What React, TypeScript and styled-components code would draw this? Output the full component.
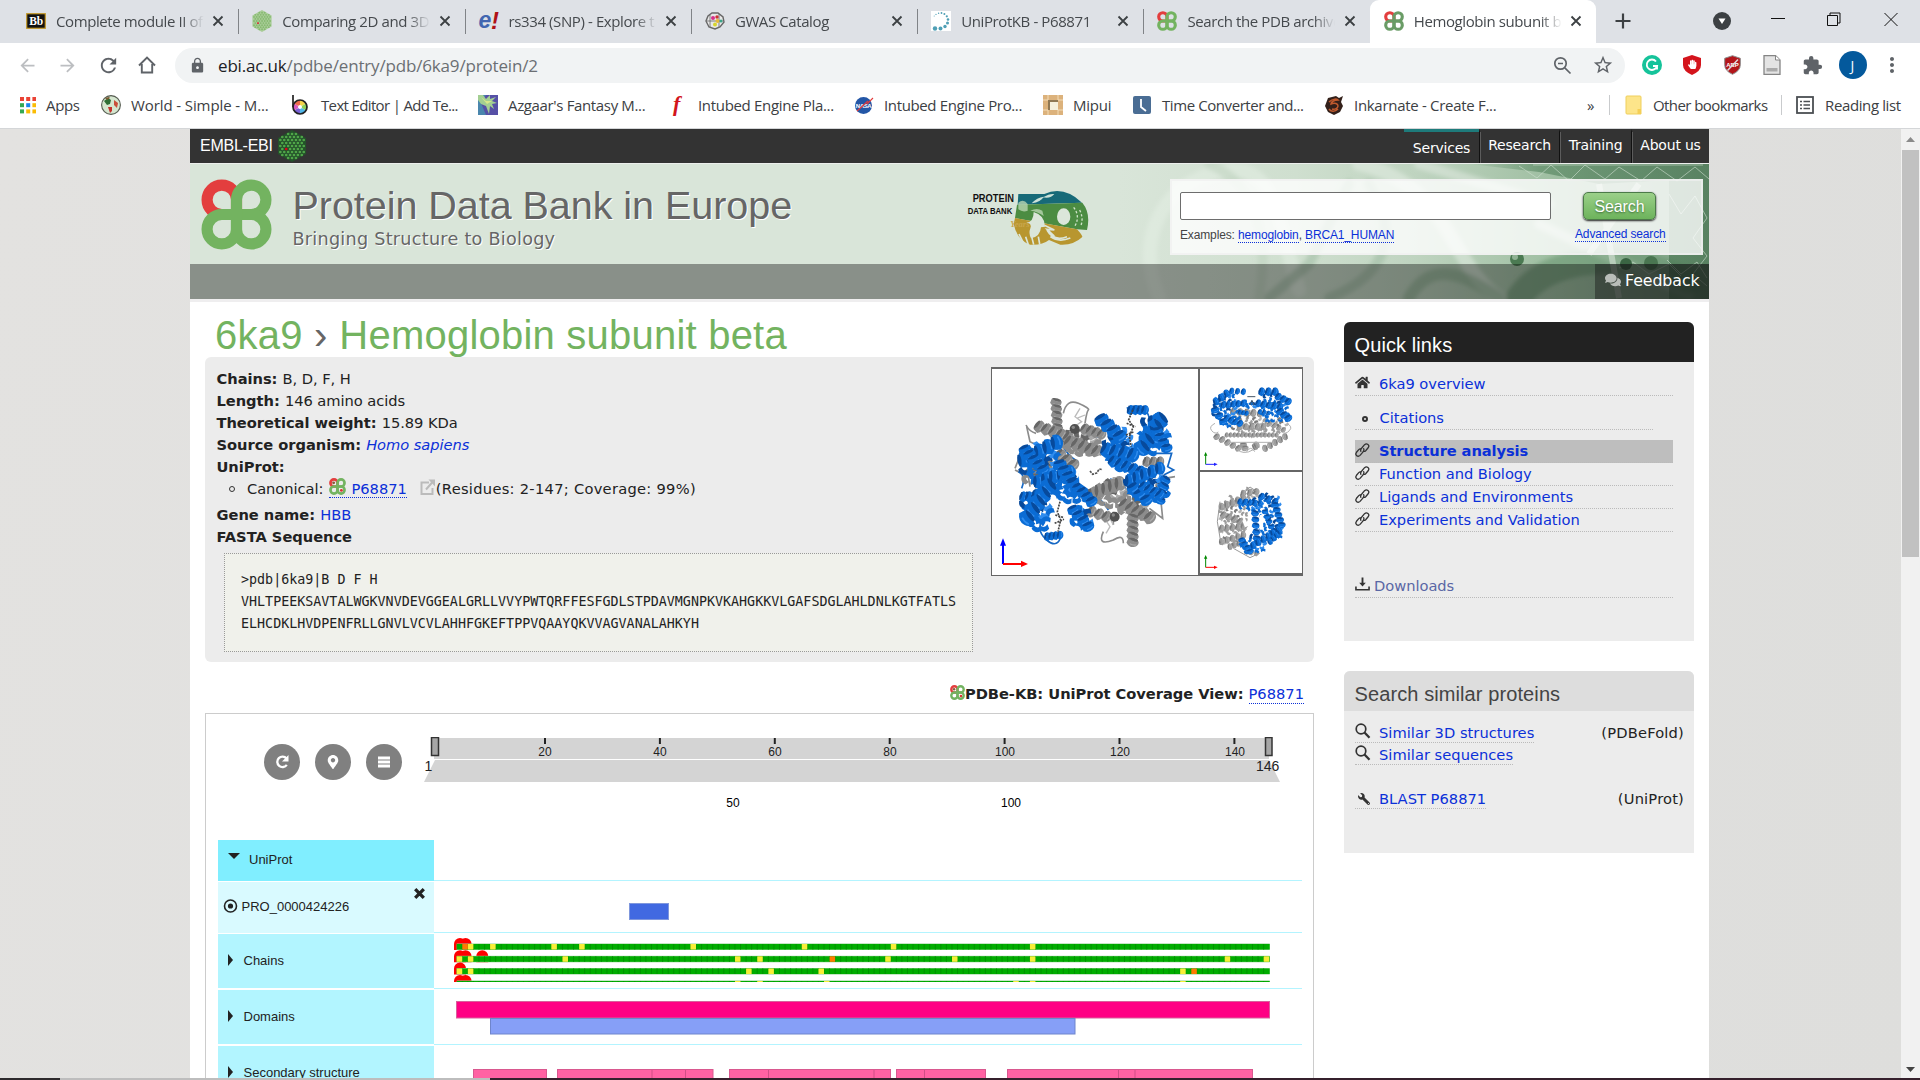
import React from "react";
import styled, { createGlobalStyle, css } from "styled-components";
import { MdArrowBack, MdArrowForward, MdRefresh, MdLock, MdExtension, MdMoreVert, MdStarBorder } from "react-icons/md";
import { FaHome, FaWrench, FaMapMarkerAlt, FaHandPaper, FaComments } from "react-icons/fa";

const ui = `"Open Sans", "Noto Sans", sans-serif`;
const verdana = `"DejaVu Sans", Verdana, sans-serif`;
const arial = `"Liberation Sans", Arial, sans-serif`;
const mono = `"DejaVu Sans Mono", monospace`;
const linkBlue = "#0b30d8";

const GlobalStyle = createGlobalStyle`
  *, *::before, *::after { box-sizing: border-box; }
  body { margin: 0; background: #fff; overflow: hidden; }
  svg { display: block; flex: none; }
`;

const Screen = styled.div`
  width: 1920px;
  height: 1080px;
  display: flex;
  flex-direction: column;
  overflow: hidden;
`;

/* ---------- browser chrome ---------- */

const TabStrip = styled.div`
  flex: none;
  height: 43px;
  background: #dee1e6;
  display: flex;
  padding-left: 12px;
`;

const TabBox = styled.div<{ $active?: boolean; $sep?: boolean }>`
  flex: none;
  width: 226.3px;
  height: 43px;
  display: flex;
  align-items: center;
  padding: 0 14px 2px;
  font: 15px/20px ${ui};
  letter-spacing: -0.4px;
  color: #45494d;
  position: relative;
  ${(p) => p.$active && css`
    background: #fff;
    border-radius: 9px 9px 0 0;
  `}
  ${(p) => p.$sep && css`
    &::after {
      content: "";
      position: absolute;
      right: -1px;
      top: 9px;
      width: 1px;
      height: 25px;
      background: #808387;
    }
  `}
`;

const TabTitle = styled.div`
  width: 148px;
  margin-left: 10px;
  overflow: hidden;
  white-space: nowrap;
  mask-image: linear-gradient(90deg, #000 126px, transparent 148px);
`;

const TabClose = styled.span`
  flex: 1;
  display: flex;
  justify-content: flex-end;
`;

const WindowControls = styled.div`
  flex: 1;
  display: flex;
  align-items: center;
  padding: 0 22px 2px 18px;
`;

const Spacer = styled.div<{ $w?: number }>`
  ${(p) => (p.$w ? `flex: none; width: ${p.$w}px;` : "flex: 1;")}
`;

const Toolbar = styled.div`
  flex: none;
  height: 44px;
  display: flex;
  align-items: center;
  padding-left: 15px;
`;

const NavIcon = styled.span<{ $dim?: boolean }>`
  flex: none;
  width: 40px;
  display: flex;
  padding-left: 2px;
  color: ${(p) => (p.$dim ? "#bcbec1" : "#5f6368")};
`;

const Omnibox = styled.div`
  width: 1450px;
  height: 35px;
  border-radius: 18px;
  background: #f1f3f4;
  display: flex;
  align-items: center;
  padding: 0 11px 0 14px;
  color: #5f6368;
  font: 17px/24px ${ui};
  letter-spacing: -0.17px;
`;

const Url = styled.div`
  flex: 1;
  margin-left: 12px;
  padding-top: 1px;
  color: #6b6f73;
  b { font-weight: 400; color: #202124; }
`;

const Extensions = styled.div`
  display: flex;
  align-items: center;
`;

const ExtSlot = styled.span<{ $w: number }>`
  width: ${(p) => p.$w}px;
  display: flex;
  justify-content: center;
  color: #5f6368;
`;

const Avatar = styled.span`
  width: 28px;
  height: 28px;
  border-radius: 50%;
  background: #04599c;
  color: #fff;
  display: flex;
  align-items: center;
  justify-content: center;
  font: 14px ${ui};
`;

const BookmarkBar = styled.div`
  flex: none;
  height: 42px;
  border-bottom: 1px solid #d4d6d8;
  display: flex;
  align-items: center;
  padding: 0 18px 6px 18px;
  font: 15px/20px ${ui};
  color: #3c4043;
`;

const Bookmark = styled.div<{ $w: number; $ls?: number }>`
  flex: none;
  width: ${(p) => p.$w}px;
  display: flex;
  align-items: center;
  gap: 10px;
  white-space: nowrap;
  letter-spacing: ${(p) => p.$ls ?? -0.5}px;
`;

const Bar = styled.span`
  width: 1px;
  height: 20px;
  background: #c9cbcd;
`;

/* ---------- page ---------- */

const Viewport = styled.div`
  flex: 1;
  min-height: 0;
  display: flex;
  background: linear-gradient(100deg, #e3e2e0 0%, #e0e0df 50%, #dededc 100%);
  overflow: hidden;
`;

const PageWrap = styled.div`
  width: 1901px;
  padding-left: 190px;
  overflow: hidden;
`;

const Page = styled.div`
  width: 1519px;
  height: 949px;
  background: #fff;
`;

const ScrollTrack = styled.div`
  flex: 1;
  background: #f1f1f1;
  display: flex;
  flex-direction: column;
  align-items: center;
  justify-content: space-between;
  padding: 8px 0 6px;
`;

const ScrollThumb = styled.div`
  width: 17px;
  height: 407px;
  background: #c1c1c1;
  margin-bottom: auto;
  margin-top: 8px;
`;

const MastTop = styled.div`
  height: 34px;
  background: #333;
  display: flex;
  padding-left: 10px;
`;

const Embl = styled.div`
  display: flex;
  align-items: center;
  gap: 5px;
  color: #fff;
  font: 16px ${arial};
  letter-spacing: -0.25px;
  flex: 1;
`;

const MastLink = styled.div<{ $w: number; $on?: boolean }>`
  width: ${(p) => p.$w}px;
  border-top: 3px solid ${(p) => (p.$on ? "#1e7b7b" : "#333")};
  ${(p) => !p.$on && "border-left: 1px solid #111; box-shadow: inset 1px 0 #5c5c5c;"}
  padding-top: ${(p) => (p.$on ? 4 : 1)}px;
  text-align: center;
  color: #fff;
  font: 14px/24px ${verdana};
  letter-spacing: -0.2px;
`;

const Banner = styled.div`
  height: 136px;
  position: relative;
  border-top: 1px solid #eceeec;
  background: #d9e5d9;
`;

const BannerArt = styled.svg`
  position: absolute;
  right: 0;
  top: 0;
`;

const BannerRow = styled.div`
  position: relative;
  height: 100px;
  display: flex;
  padding: 15px 6px 0 11px;
`;

const SiteName = styled.div`
  margin-left: 20.5px;
  width: 673px;
  color: #666;
  text-shadow: 1px 1px 0 #fff;
`;

const SiteTitle = styled.div`
  font: 39.5px/46px ${arial};
  letter-spacing: -0.04px;
  margin-top: 3px;
`;

const SiteTag = styled.div`
  font: 17.6px/22px ${verdana};
  letter-spacing: 0.27px;
`;

const YearsBox = styled.div`
  width: 203px;
  padding-top: 11px;
`;

const SearchPanel = styled.div`
  margin-left: auto;
  width: 533px;
  height: 76px;
  background: rgba(255, 255, 255, 0.8);
  border: 2px solid rgba(240, 240, 240, 0.7);
  display: flex;
  padding: 11px 0 0 8px;
  font: 12px/16px ${arial};
  letter-spacing: -0.14px;
  color: #444;
`;

const SearchField = styled.div`
  width: 371px;
  height: 28px;
  border: 1px solid #6d6d6d;
  border-radius: 2px;
  background: #fff;
  margin-bottom: 7px;
`;

const DotLink = styled.a`
  color: ${linkBlue};
  border-bottom: 1px dotted ${linkBlue};
`;

const SearchAction = styled.div`
  margin-left: 24px;
  width: 92px;
`;

const SearchButton = styled.div`
  width: 73px;
  height: 28px;
  margin: 0 0 6px 8px;
  border: 1px solid #4c7a49;
  border-radius: 5px;
  box-shadow: 0 1px 2px #222;
  background: linear-gradient(#9bd089, #6db35c);
  color: #fff;
  text-shadow: 0 1px 2px #3a6a35;
  text-align: center;
  font: 16px/27px ${arial};
`;

const NavBand = styled.div`
  position: relative;
  height: 35px;
  background: rgba(0, 0, 0, 0.37);
  display: flex;
  justify-content: flex-end;
`;

const Feedback = styled.div`
  width: 114px;
  background: rgba(30, 34, 32, 0.5);
  color: #fff;
  display: flex;
  align-items: center;
  gap: 4px;
  padding: 0 9px 3px 10px;
  font: 15.8px ${verdana};
  letter-spacing: -0.08px;
  svg { color: #b9bdb9; }
`;

const Content = styled.div`
  border-top: 3px solid #efeeef;
  display: flex;
  padding-left: 15px;
`;

const MainCol = styled.div`
  width: 1109px;
`;

const Heading = styled.h1`
  margin: 0;
  height: 55px;
  padding: 12px 0 0 10px;
  font: 400 40px/42px ${arial};
  color: #73b360;
  white-space: nowrap;
  letter-spacing: 0.22px;
  span { color: #666; margin: 0 0.5px 0 0; }
`;

const Summary = styled.section`
  height: 305px;
  border-radius: 6px;
  background: #ececec;
  display: flex;
  justify-content: space-between;
  padding: 10px 11px 0 11px;
`;

const Facts = styled.div`
  font: 14.67px/22px ${verdana};
  letter-spacing: -0.05px;
  color: #222;
  padding-top: 1px;
`;

const Fact = styled.div`
  height: 22px;
  padding-left: 0.5px;
  white-space: nowrap;
  b { letter-spacing: -0.03px; margin-right: 0.5px; }
  a { color: ${linkBlue}; }
`;

const CanonicalRow = styled.div`
  height: 26px;
  padding-left: 13px;
  display: flex;
  white-space: nowrap;
`;

const Bullet = styled.span<{ $ml?: number; $dark?: boolean }>`
  width: 6px;
  height: 6px;
  border: ${(p) => (p.$dark ? "2px solid #333" : "1px solid #333")};
  border-radius: 50%;
  margin: ${(p) => (p.$dark ? 9 : 8)}px 12px 0 ${(p) => p.$ml || 0}px;
`;

const KbLink = styled.a`
  display: inline-flex;
  gap: 5px;
  height: 20px;
  margin: 0 13px 0 6px;
  color: ${linkBlue};
  border-bottom: 1px dotted ${linkBlue};
  letter-spacing: 0;
`;

const Residues = styled.span`
  letter-spacing: 0.28px;
`;

const Fasta = styled.pre`
  margin: 5px 0 0 8px;
  width: 749px;
  height: 99px;
  border: 1px dotted #999;
  background: #f0f1eb;
  padding: 15px 16px 0;
  font: 13.35px/22px ${mono};
  letter-spacing: 0;
  color: #222;
`;

const Images = styled.div`
  width: 312px;
  height: 209px;
  background: #666;
  display: grid;
  grid-template-columns: 206px 102px;
  grid-template-rows: 101px 101px;
  gap: 2px;
  padding: 2px 1px 1px;
  svg { background: #fff; }
  > :first-child { grid-row: 1 / 3; height: 206px; }
`;

const CoverageRow = styled.div`
  height: 51px;
  display: flex;
  justify-content: flex-end;
  align-items: flex-start;
  padding: 21px 10px 0 0;
  font: 700 14.67px/22px ${verdana};
  letter-spacing: -0.03px;
  color: #222;
  svg { margin-top: 2px; }
  a { font-weight: 400; line-height: 18px; margin: 2px 0 0 5px; letter-spacing: 0; }
`;

const Viewer = styled.section`
  height: 400px;
  border: 1px solid #ccc;
  padding: 23px 11px 0 12px;
  font: 13px ${arial};
  color: #222;
`;

const ViewerTop = styled.div`
  height: 103px;
  display: flex;
`;

const Controls = styled.div`
  width: 204px;
  display: flex;
  gap: 15px;
  padding: 7px 0 0 46px;
`;

const RoundButton = styled.span`
  width: 36px;
  height: 36px;
  border-radius: 50%;
  background: #808080;
  color: #fff;
  display: flex;
  align-items: center;
  justify-content: center;
`;

const TrackRow = styled.div<{ $h: number }>`
  height: ${(p) => p.$h}px;
  display: flex;
`;

const TrackLabel = styled.div<{ $bg: string; $gap: number; $pl: number; $pb?: number }>`
  width: 216px;
  background: ${(p) => p.$bg};
  border-bottom: ${(p) => p.$gap}px solid #fff;
  display: flex;
  align-items: center;
  padding: 0 9px ${(p) => p.$pb ?? 2}px ${(p) => p.$pl}px;
`;

const TrackPlot = styled.div`
  flex: 1;
  border-bottom: 1px solid #b3f4ff;
  margin-bottom: 1px;
`;

const Caret = styled.span<{ $down?: boolean }>`
  ${(p) => p.$down
    ? css`border: 6px solid transparent; border-top-color: #222; border-bottom: 0; margin: -6px 9px 0 0;`
    : css`border: 6px solid transparent; border-left: 5.5px solid #222; border-right: 0; margin: -1px 10.5px 0 0;`}
`;

const Side = styled.aside`
  width: 351px;
  margin: 20px 0 0 30px;
`;

const SideBox = styled.section<{ $h: number; $mb?: number }>`
  height: ${(p) => p.$h}px;
  width: 350px;
  margin-bottom: ${(p) => p.$mb || 0}px;
  background: #ececec;
  border-radius: 6px 6px 0 0;
  font: 14.67px/22px ${verdana};
  letter-spacing: -0.03px;
  color: #222;
`;

const SideHead = styled.h3<{ $dark?: boolean }>`
  margin: 0;
  height: 40px;
  padding: 6px 0 0 10.5px;
  border-radius: 6px 6px 0 0;
  font: 400 20px/34px ${arial};
  letter-spacing: 0.1px;
  background: ${(p) => (p.$dark ? "#222" : "#ddd")};
  color: ${(p) => (p.$dark ? "#fff" : "#444")};
`;

const SideLink = styled.div<{ $mt: number; $w?: number; $on?: boolean; $muted?: boolean }>`
  width: ${(p) => p.$w || 318}px;
  height: 23px;
  margin: ${(p) => p.$mt}px 0 0 11px;
  border-bottom: 1px dotted #bbb;
  display: flex;
  color: ${(p) => (p.$muted ? "#5a67a5" : linkBlue)};
  ${(p) => p.$on && "background: #bebebe; font-weight: 700; letter-spacing: -0.1px; line-height: 21px;"}
`;

const IconSlot = styled.span<{ $w?: number }>`
  width: ${(p) => p.$w || 24}px;
  flex: none;
  padding-top: 2px;
  color: #333;
`;

const SimilarRow = styled.div<{ $mt: number }>`
  height: 22px;
  margin: ${(p) => p.$mt}px 10px 0 11px;
  display: flex;
  justify-content: space-between;
  line-height: 23px;
  > a { display: flex; height: 22px; color: ${linkBlue}; border-bottom: 1px dotted #bbb; letter-spacing: 0.02px; }
  > span { letter-spacing: 0.18px; }
`;

const FlippedWrench = styled.span`
  display: block;
  transform: scaleX(-1);
  width: 16px;
  padding: 4px 0 0 1px;
`;

const DeleteBox = styled.span`
  align-self: flex-start;
  padding-top: 6px;
`;

const Taskbar = styled.div`
  flex: none;
  height: 2px;
  background: linear-gradient(90deg, #2d2a2c 60px, #bdbdbd 60px, #bdbdbd 490px, #35202c 490px);
`;

/* ---------- drawings ---------- */

const petal = "M35 35 V20.5 A14.5 14.5 0 1 1 49.5 35 Z";
const PdbeLogo = ({ size, kb, soft }: { size: number; kb?: boolean; soft?: boolean }) => (
  <svg width={size} height={size} viewBox="0 0 70 70" fill="none" strokeWidth={11}>
    <path d={petal} transform="rotate(-90 35 35)" stroke="#e33e3e" />
    {[0, 90, 180].map((r) => (
      <path key={r} d={petal} transform={`rotate(${r} 35 35)`} stroke={soft ? "#6a9c66" : "#73b360"} />
    ))}
    {kb && <g><circle cx="19" cy="20" r="6" fill="#8a5a3c" /><circle cx="51" cy="51" r="6" fill="#d33" /></g>}
  </svg>
);

const HexLogo = ({ w, h, bg, fg }: { w: number; h: number; bg: string; fg: string }) => {
  const dots: React.ReactNode[] = [];
  for (let r = 0; r < 11; r++)
    for (let c = 0; c < 8; c++) {
      const x = 0.4 + c * 3.9 + (r % 2 ? 1.95 : 0);
      const y = 1 + r * 3;
      if (Math.abs(x - 14) * 0.577 + Math.abs(y - 16) < 15.6 && Math.abs(x - 14) < 13)
        dots.push(<circle key={r + "-" + c} cx={x} cy={y} r="1.35" fill={r === 6 && c === 2 ? "#e2001a" : fg} />);
    }
  return (
    <svg width={w} height={h} viewBox="0 0 28 32">
      <path d="M14 0 28 8V24L14 32 0 24V8Z" fill={bg} />
      {dots}
    </svg>
  );
};

const CloseX = () => (
  <svg width="12" height="12" viewBox="0 0 12 12" stroke="#3c4043" strokeWidth="1.8"><path d="M1.5 1.5l9 9M10.5 1.5l-9 9" /></svg>
);

const BbIcon = () => (
  <svg width="20" height="16" viewBox="0 0 20 16"><rect x=".7" y=".7" width="18.6" height="14.6" fill="#111" stroke="#c59b2c" strokeWidth="1.2" />
    <text x="10" y="12" textAnchor="middle" fontFamily="Liberation Serif" fontWeight="700" fontSize="11.5" fill="#fff">Bb</text></svg>
);
const EnsemblIcon = () => (
  <svg width="20" height="22" viewBox="0 0 20 22" overflow="visible"><text x="-0.5" y="18" fontFamily="Liberation Sans" fontStyle="italic" fontWeight="700" fontSize="23" fill="#4166b0">e</text>
    <text x="12" y="19" fontFamily="Liberation Sans" fontStyle="italic" fontWeight="700" fontSize="24" fill="#b01217">!</text></svg>
);
const GwasIcon = () => (
  <svg width="20" height="20" viewBox="0 0 20 20" fill="none" stroke="#666"><path d="M7 2h6l5 4 1 5-4 5-5 2-6-2-3-6 2-5z" fill="#e8e8e8" strokeWidth="1.4" />
    <path d="M2 10h16M5 4v12M14 3v13" strokeWidth=".8" />
    <g stroke="none"><circle cx="8" cy="7" r="2" fill="#d6308a" /><circle cx="12" cy="6" r="1.7" fill="#c33" /><circle cx="12.5" cy="10" r="2" fill="#e7b93a" /><circle cx="10" cy="13.5" r="2" fill="#d7d42f" /><circle cx="16" cy="10" r="1.5" fill="#3aa58a" /></g></svg>
);
const UniprotIcon = () => (
  <svg width="20" height="20" viewBox="0 0 20 20"><rect width="20" height="20" fill="#fff" />
    {[[4, 17.5, 2.2], [9.5, 17.5, 2], [14, 15.5, 1.7], [16.5, 12, 1.5], [17, 8.5, 1.3], [15.8, 5.3, 1.1], [13.4, 3, 1], [10.5, 2, .9], [7.6, 2.2, .7], [5, 3.4, .6], [3.2, 5, .5]].map(([x, y, r]) => <circle key={x + "" + y} cx={x} cy={y} r={r} fill="#4f9fb5" />)}</svg>
);

const AppsIcon = () => (
  <svg width="18" height="18" viewBox="0 0 18 18">
    {["#ea4335", "#ea4335", "#ea4335", "#34a853", "#1a85ec", "#fbbc04", "#34a853", "#fbbc04", "#fbbc04"].map((c, i) => (
      <rect key={i} x={2 + (i % 3) * 6.2} y={1 + Math.floor(i / 3) * 6.2} width="4" height="4" fill={c} />
    ))}</svg>
);
const WorldIcon = () => (
  <svg width="20" height="20" viewBox="0 0 20 20"><circle cx="10" cy="10" r="9.4" fill="#d5e6cf" stroke="#555b50" strokeWidth="1.1" />
    <path d="M3 6l4-3 3 2-1 4-3 1z" fill="#2f6e35" /><path d="M7 12l4 0 0 4-2 2z" fill="#c2312c" /><path d="M13 5l4 3-1 5-3-3z" fill="#c94f3a" /><path d="M4 3l4-1 1 1-3 2z" fill="#7b5a31" /></svg>
);
const WheelIcon = () => (
  <svg width="20" height="20" viewBox="0 0 20 20">
    <path d="M9 12V5a7 7 0 0 1 6.1 3.5z" fill="#f6d34a" /><path d="M9 12l6.1-3.5a7 7 0 0 1 0 7z" fill="#8ed05a" /><path d="M9 12l6.1 3.5A7 7 0 0 1 9 19z" fill="#4fb6e8" /><path d="M9 12v7a7 7 0 0 1-6-3.5z" fill="#7a62d8" /><path d="M9 12l-6 3.5a7 7 0 0 1 0-7z" fill="#d75bc0" /><path d="M9 12L3 8.5A7 7 0 0 1 9 5z" fill="#ee6a4a" />
    <circle cx="9" cy="12" r="7" fill="none" stroke="#222" strokeWidth="1.7" /><circle cx="9" cy="12" r="2" fill="#fff" /><path d="M2 0v12" stroke="#222" strokeWidth="1.7" /></svg>
);
const AzgaarIcon = () => (
  <svg width="20" height="20" viewBox="0 0 20 20"><rect width="20" height="20" fill="#5650a6" /><path d="M0 0h8L3 8l5 12H0z" fill="#4a86ad" />
    <path d="M0 0h5l3 4 4-4 0 4 6-2-4 4 5 2-5 1 2 5-4-3-1 8-3-8-5-2-3-4z" fill="#a3cf92" /><path d="M3 2l5 4 6 0-5 3z" fill="#d9e88a" /></svg>
);
const FIcon = () => (
  <svg width="20" height="24" viewBox="0 0 20 24" overflow="visible"><text x="5" y="18" fontFamily="Liberation Serif" fontStyle="italic" fontWeight="700" fontSize="22" fill="#d2151c">f</text></svg>
);
const NasaIcon = () => (
  <svg width="20" height="20" viewBox="0 0 20 20"><circle cx="9.5" cy="10.5" r="8.5" fill="#2356a6" /><text x="9.5" y="13" textAnchor="middle" fontFamily="Liberation Sans" fontWeight="700" fontSize="6" fill="#fff">NASA</text><path d="M13 9L19 3M3 16L14 6" stroke="#e23b3b" strokeWidth="1.1" /></svg>
);
const MipuiIcon = () => (
  <svg width="20" height="20" viewBox="0 0 20 20"><rect width="20" height="20" fill="#dcb27c" /><rect x="5" y="5" width="10" height="10" fill="#f5f0dc" /><path d="M5 5h10v2H7v8H5z" fill="#8f7853" /><path d="M5 0v5M15 0v5M5 15v5M15 15v5M0 5h5M0 15h5M15 5h5M15 15h5" stroke="#f3dcb6" /></svg>
);
const ClockIcon = () => (
  <svg width="20" height="20" viewBox="0 0 20 20"><rect x="1" y="1" width="18" height="18" rx="2" fill="#4a6d94" /><path d="M9 4v8l5 4" stroke="#fff" strokeWidth="1.8" fill="none" /></svg>
);
const InkIcon = () => (
  <svg width="20" height="20" viewBox="0 0 20 20"><path d="M4 3l8-2 3 2 4-2-2 6 2 4-3 6-6 3-6-3-3-6z" fill="#33201a" /><path d="M5 7c4-4 8-3 9-2-4 0-7 2-7 4 4-2 7 0 7 2s-3 4-6 3M5 14c2 3 6 3 9 0" stroke="#c05a2e" strokeWidth="1.5" fill="none" /></svg>
);
const FolderIcon = () => (
  <svg width="18" height="20" viewBox="0 0 18 20"><path d="M1 2q0-1 1-1h13q1 0 1 1v17H2q-1 0-1-1z" fill="#fde58a" stroke="#efcf5c" /><path d="M12.5 19v-5h3.5v5z" fill="#f5cf55" /></svg>
);
const ListIcon = () => (
  <svg width="20" height="18" viewBox="0 0 20 18" fill="none" stroke="#4b4f53"><rect x="2" y="1" width="16" height="16" strokeWidth="1.8" /><path d="M5 5.5h2M5 9h2M5 12.5h2M8.5 5.5H15M8.5 9H15M8.5 12.5H15" strokeWidth="1.6" /></svg>
);

const Magnifier = () => (
  <svg width="16" height="16" viewBox="0 0 16 16" fill="none" stroke="#333"><circle cx="6" cy="6" r="4.8" strokeWidth="1.7" /><path d="M9.5 9.5l5 5.2" strokeWidth="2.3" /></svg>
);
const ChainIcon = () => (
  <svg width="15" height="17" viewBox="0 0 16 17" fill="none" stroke="#333" strokeWidth="1.4" strokeLinecap="round">
    <path d="M6.2 9.4Q5.6 7.6 7 6.1L10.2 2.3Q12 .6 13.8 2T14 5.6L11.4 8.7Q10.4 9.7 9.1 9.4" />
    <path d="M9.3 6.6Q10 8.4 8.6 9.9L5.4 13.7Q3.6 15.4 1.8 14T1.6 10.4L4 7.6Q4.9 6.7 6 6.9" />
  </svg>
);
const DownloadIcon = () => (
  <svg width="15" height="16" viewBox="0 0 16 16" fill="none" stroke="#333"><path d="M8 0v7" strokeWidth="2" /><path d="M4.5 5.5h7L8 9.5z" fill="#333" stroke="none" /><path d="M1 9.5v3.5h14V9.5" strokeWidth="1.7" /></svg>
);
const ExternalIcon = () => (
  <svg width="16" height="18" viewBox="0 0 16 18" fill="none" stroke="#bbb" strokeWidth="2"><path d="M9 4.5H1.5V16h11v-6M6 11.5l7-8" /><path d="M8.5 1.5H15v7z" fill="#bbb" stroke="none" /></svg>
);
const WrenchIcon = () => <FlippedWrench><FaWrench size={12} /></FlippedWrench>;
const DeleteMark = () => (
  <DeleteBox>
    <svg width="11" height="11" viewBox="0 0 11 11" stroke="#222" strokeWidth="3.3"><path d="M1.2 1.2l8.6 8.6M9.8 1.2l-8.6 8.6" /></svg>
  </DeleteBox>
);

const Pdb50 = () => (
  <svg width="124" height="56" viewBox="0 0 372 168">
    <g fontFamily="Liberation Sans Narrow, Liberation Sans" fontWeight="700" fill="#111">
      <text x="0" y="0" fontSize="25" transform="translate(17 37) scale(1 1.25)" textLength="124" lengthAdjust="spacingAndGlyphs">PROTEIN</text>
      <text x="0" y="0" fontSize="21" transform="translate(2 72) scale(1 1.25)" textLength="134" lengthAdjust="spacingAndGlyphs">DATA BANK</text>
    </g>
    <path d="M154 12H232Q290-14 345 38L152 44Z" fill="#176a78" />
    <path d="M150 44L228 42 346 38Q372 70 360 120L330 118 144 84Z" fill="#4b8c42" />
    <path d="M144 84L330 118Q350 140 345 142Q320 166 280 164L246 150Q226 166 190 164Q150 150 140 102Z" fill="#b8962f" />
    <path d="M200 66Q234 76 234 110L222 112Q220 140 192 145Q184 130 190 115T178 98Q200 96 200 66Z" fill="#dbe6da" />
    <ellipse cx="290" cy="80" rx="20" ry="25" fill="#dbe6da" />
    <path d="M154 38q15-14 28 4v20q-15 6-28-4zM190 62q20-10 36 0l4 16q-18-14-40-16z" fill="#b9d6b2" opacity=".8" />
    <path d="M240 120q20 36 60 20M250 140q25 18 60 4M232 106l30 14-22-2 22 20M170 160l-14-28M184 164l-8-24M200 164l-6-24M218 162l-4-22" stroke="#dbe6da" strokeWidth="5" fill="none" />
    <path d="M194 40q16-18 36-20-8 16-36 20M228 22q20-12 34-10-10 14-34 10" fill="#cde2d8" />
    <path d="M320 52q20 26 4 56M338 60q12 25 4 46" stroke="#cfe3c9" strokeWidth="4" fill="none" strokeDasharray="7 6" />
    <text x="130" y="112" fontFamily="Liberation Serif" fontStyle="italic" fontWeight="700" fontSize="26" fill="#c9a64c">Years</text>
  </svg>
);

type Helix = [number, number, number, number, number];
type Tone = "b" | "g";
const tones = {
  b: { main: "#0b6cd4", dark: "#074a9c", lite: "#2f8cee" },
  g: { main: "#8c8c8c", dark: "#666", lite: "#a9a9a9" },
};

/* a helix seen from the side: wide flat turns, slightly tilted against the axis */
const HelixStrand = ({ h, tone, turn = 0.55 }: { h: Helix; tone: Tone; turn?: number }) => {
  const [x1, y1, x2, y2, w] = h;
  const len = Math.hypot(x2 - x1, y2 - y1);
  const n = Math.max(1, Math.round(len / (w * turn)));
  const ang = (Math.atan2(y2 - y1, x2 - x1) * 180) / Math.PI;
  const { main, dark, lite } = tones[tone];
  return (
    <g>
      {Array.from({ length: n + 1 }, (_, i) => {
        const x = x1 + ((x2 - x1) * i) / n, y = y1 + ((y2 - y1) * i) / n;
        return (
          <g key={i} transform={`translate(${x} ${y}) rotate(${ang + 16}) scale(${w / 40})`}>
            <path d="M-12 -15Q-18 0 -12 15L0 18Q-6 0 0 -18Z" fill={dark} />
            <path d="M-8 -19Q8 -23 14 -8T6 20L-10 17Q0 0 -8 -19Z" fill={main} />
            <path d="M5 -14Q10 -4 7 8" stroke={lite} strokeWidth="4" fill="none" />
          </g>
        );
      })}
    </g>
  );
};

/* short ribbon pieces spread over an elliptical patch of the fold */
type Patch = [number, number, number, number, number];
const RibbonPatch = ({ patch, tone, size }: { patch: Patch; tone: Tone; size: number }) => {
  const [cx, cy, rx, ry, count] = patch;
  const { main, dark, lite } = tones[tone];
  const fills = [dark, main, main, lite, main];
  return (
    <g>
      {Array.from({ length: count }, (_, i) => {
        const a = i * 2.4, r = Math.sqrt((i + 0.5) / count);
        return (
          <path
            key={i}
            d="M-11 -6Q0 -16 12 -5L9 6Q0 -3 -9 6Z"
            fill={fills[i % 5]}
            transform={`translate(${cx + Math.cos(a) * r * rx} ${cy + Math.sin(a) * r * ry}) rotate(${(i * 67) % 360}) scale(${size})`}
          />
        );
      })}
    </g>
  );
};

const greyMain: Helix[] = [[288, 142, 292, 218, 34], [238, 215, 325, 248, 38], [330, 262, 412, 290, 42], [375, 222, 425, 238, 34], [300, 300, 340, 330, 40], [215, 290, 225, 380, 26], [265, 320, 260, 395, 26], [400, 415, 480, 385, 44], [495, 450, 570, 488, 42], [518, 490, 518, 562, 36], [395, 470, 440, 485, 36], [560, 320, 600, 320, 32], [585, 430, 600, 380, 22]];
const blueMain: Helix[] = [[190, 315, 290, 262, 48], [195, 285, 250, 345, 40], [235, 380, 330, 350, 42], [300, 330, 350, 400, 42], [340, 385, 395, 440, 38], [190, 425, 225, 425, 32], [265, 395, 200, 490, 52], [340, 465, 385, 515, 38], [262, 545, 300, 540, 26], [425, 195, 480, 245, 46], [512, 165, 555, 165, 30], [600, 195, 545, 280, 52], [590, 230, 620, 280, 36], [440, 285, 520, 300, 46], [460, 320, 540, 350, 38], [510, 375, 600, 340, 40], [520, 400, 560, 435, 42], [615, 375, 600, 435, 34], [550, 395, 600, 420, 34]];
const greyPatches: Patch[] = [[360, 262, 60, 36, 26], [450, 415, 58, 40, 26], [515, 455, 40, 34, 14], [230, 360, 40, 40, 12]];
const bluePatches: Patch[] = [[245, 330, 60, 66, 34], [325, 395, 52, 46, 26], [232, 465, 44, 62, 26], [480, 285, 44, 62, 26], [560, 395, 66, 46, 30], [580, 240, 46, 56, 24], [365, 488, 26, 34, 10]];

const AssemblyFront = () => (
  <svg width="206" height="206" viewBox="96 42 618 618">
    <g fill="none" strokeWidth="5" stroke="#8c8c8c">
      <path d="M310 175q10-45 45-30t30 20-10 40M200 215l10 45 40 20M198 210q10 20 30 25M165 340l20-50M165 345l40 20 5 30M645 365l-30 5-15 40 8 80-40-30M430 530q-20 45 30 25 30-20 30 10M460 470v40" />
    </g>
    <g fill="none" strokeWidth="5" stroke="#1668c4">
      <path d="M175 350q25 10 10 50M250 490q-25 35 10 65t45-20M370 245h45M310 275q15 30 45 45M500 160q50-20 65 20t-15 50M545 295h90l-12 40 18 10-30 15M450 372q50 10 50 45M385 420q35 0 60 45" />
    </g>
    {greyPatches.map((p, i) => <RibbonPatch key={i} patch={p} tone="g" size={1.2} />)}
    {greyMain.map((h, i) => <HelixStrand key={i} h={h} tone="g" />)}
    {bluePatches.map((p, i) => <RibbonPatch key={i} patch={p} tone="b" size={1.2} />)}
    {blueMain.map((h, i) => <HelixStrand key={i} h={h} tone="b" />)}
    <path d="M356 345l30-32 34-12 50 54-38 20-46 28-28-20z" fill="#fff" />
    <path d="M390 348l8 10 12-4 8-12 10 2" stroke="#555" strokeWidth="5" fill="none" strokeDasharray="7 3" />
    <path d="M518 165l-12 30 14 20-12 30 6 30M500 205l26 10M498 240l24-10M300 440l-8 30 10 25-8 35M286 480l26 8M284 505l28-12" stroke="#444" strokeWidth="5" fill="none" strokeDasharray="6 3" />
    <path d="M360 160l-15 25 20 15-15 10M375 180l-25 10M440 500l10 15-12 20M450 490l10 20" stroke="#bbb" strokeWidth="4" fill="none" />
    <circle cx="344" cy="222" r="15" fill="#505050" /><circle cx="340" cy="217" r="5" fill="#888" />
    <circle cx="464" cy="485" r="15" fill="#505050" /><circle cx="460" cy="480" r="5" fill="#888" />
    <path d="M129 627V570" stroke="#00f" strokeWidth="6" /><path d="M120 572l9-22 9 22z" fill="#00f" />
    <path d="M129 627h56" stroke="#f00" strokeWidth="6" /><path d="M183 617l21 10-21 9z" fill="#f00" />
  </svg>
);

const sideBlue: Helix[] = [[768, 140, 800, 115, 24], [815, 108, 850, 110, 20], [765, 165, 790, 200, 26], [790, 150, 850, 145, 22], [800, 190, 840, 205, 22], [905, 110, 945, 110, 26], [955, 125, 985, 140, 24], [895, 145, 960, 155, 24], [960, 170, 985, 190, 26], [840, 172, 860, 175, 16], [900, 170, 925, 175, 16]];
const sideGrey: Helix[] = [[770, 245, 835, 280, 22], [850, 270, 855, 280, 22], [885, 275, 890, 270, 22], [975, 245, 915, 280, 22], [800, 240, 950, 240, 16], [820, 170, 900, 175, 24], [840, 215, 910, 215, 22], [930, 205, 970, 225, 18]];
const sideBluePatches: Patch[] = [[800, 165, 42, 52, 34], [940, 155, 48, 50, 30], [870, 148, 36, 10, 8]];
const sideGreyPatches: Patch[] = [[870, 210, 60, 40, 40], [945, 212, 36, 24, 14]];
const topGrey: Helix[] = [[785, 455, 850, 430, 24], [790, 480, 840, 500, 24], [785, 520, 850, 515, 22], [785, 560, 850, 540, 22], [850, 415, 890, 410, 22], [810, 575, 850, 560, 20], [860, 590, 890, 595, 18]];
const topBlue: Helix[] = [[840, 440, 900, 445, 20], [905, 425, 945, 440, 24], [945, 450, 965, 510, 24], [885, 475, 890, 550, 24], [915, 470, 940, 530, 20], [865, 580, 955, 525, 24], [930, 560, 960, 530, 20], [845, 555, 870, 590, 20]];
const topGreyPatches: Patch[] = [[820, 500, 44, 76, 50], [870, 415, 26, 18, 10]];
const topBluePatches: Patch[] = [[925, 455, 40, 40, 20], [870, 450, 36, 20, 14], [935, 525, 34, 36, 18], [880, 570, 40, 28, 18]];

interface SmallViewProps { box: string; grey: Helix[]; blue: Helix[]; greyP: Patch[]; blueP: Patch[]; oy: number; xColor: string; hole?: boolean }
const SmallView = ({ box, grey, blue, greyP, blueP, oy, xColor, hole }: SmallViewProps) => (
  <svg width="102" height="101" viewBox={box}>
    <g opacity=".85">
      {greyP.map((p, i) => <RibbonPatch key={i} patch={p} tone="g" size={0.6} />)}
      {grey.map((h, i) => <HelixStrand key={i} h={h} tone="g" turn={0.75} />)}
    </g>
    {blueP.map((p, i) => <RibbonPatch key={i} patch={p} tone="b" size={0.65} />)}
    {blue.map((h, i) => <HelixStrand key={i} h={h} tone="b" turn={0.75} />)}
    {hole
      ? <g fill="none" stroke="#9a9a9a" strokeWidth="3"><path d="M855 410l15-14 18 12M780 440l-8 60 10 60M820 580l50 28 30-14" /><path d="M904 480v44M852 495l8 20" stroke="#fff" strokeWidth="11" /></g>
      : <g fill="none" stroke="#b0b0b0" strokeWidth="3"><path d="M765 205q-20 10-10 22t20 4M980 205q20 10 8 22t-18 4M860 290q12-20 24 0M805 262h130M830 282q20 20 50 2" /><path d="M862 125h24M870 150l6-14 6 14" stroke="#456" /></g>}
    <path d={`M737 ${oy}v-28`} stroke="#080" strokeWidth="3" /><path d={`M732 ${oy - 26}l5-11 5 11z`} fill="#080" />
    <path d={`M737 ${oy}h27`} stroke={xColor} strokeWidth="3" /><path d={`M762 ${oy - 5}l11 5-11 5z`} fill={xColor} />
  </svg>
);

const Banner3d = () => (
  <BannerArt width="590" height="135" viewBox="0 0 590 135">
    <defs>
      <linearGradient id="fade" x1="0" x2="1">
        <stop offset="0" stopColor="#d9e5d9" /><stop offset=".3" stopColor="#cfdfcf" /><stop offset=".5" stopColor="#bfd4c0" /><stop offset=".75" stopColor="#9dbda0" /><stop offset="1" stopColor="#7da184" />
      </linearGradient>
      <linearGradient id="meshFade" x1="0" x2="1">
        <stop offset="0" stopColor="#4b7d56" stopOpacity="0" /><stop offset=".3" stopColor="#4b7d56" stopOpacity=".55" /><stop offset="1" stopColor="#3f6c49" stopOpacity=".6" />
      </linearGradient>
      <filter id="soft"><feGaussianBlur stdDeviation="2" /></filter>
    </defs>
    <rect width="590" height="135" fill="url(#fade)" />
    <g fill="none" strokeLinecap="round" filter="url(#soft)">
      <path d="M40 134C10 60 60 10 110 6s50 60 70 120" stroke="#e6efe6" strokeWidth="14" opacity=".5" />
      <path d="M90 0c50 20 60 80 50 134" stroke="#bdd2be" strokeWidth="10" opacity=".5" />
      <path d="M230 20L190 100 150 134M250 20c30 50 20 90-40 114" stroke="#9cba9f" strokeWidth="10" opacity=".5" />
      <path d="M240 0c90 20 90 100 140 134" stroke="#e7f0e7" strokeWidth="14" opacity=".5" />
      <path d="M290 134c20-36 50-28 90 0" stroke="#80a685" strokeWidth="12" opacity=".45" />
      <path d="M300 0l130 40M420 60l150 70" stroke="#e8f0e8" strokeWidth="10" opacity=".45" />
      <path d="M400 134q20-30 70-36t100 20" stroke="#5f8f68" strokeWidth="26" opacity=".5" />
    </g>
    <path d="M350 0h240v135h-40V16L480 20 420 8Z" fill="url(#meshFade)" />
    <path d="M400 2l18 12 14-13 18 16 16-16 20 14 14-12 22 14 16-14 20 14 18-14 14 12M414 1h170M550 30l12 20 14-18 12 22-14 20 14 18-14 18 14 12M548 96l14 14 16-12 10 16M500 104l14-6 16 12 20-10 12 12" fill="none" stroke="#cfe0d0" strokeWidth="1" opacity=".6" />
    <circle cx="398" cy="95" r="7" fill="#4b7a52" /><circle cx="396" cy="93" r="3" fill="#8fb293" />
    <circle cx="507" cy="100" r="6" fill="#3a6543" /><circle cx="532" cy="99" r="7" fill="#4a7651" />
    <path d="M480 20l20 114M470 90l50-70" stroke="#dfe9df" strokeWidth="6" opacity=".55" />
  </BannerArt>
);

const Ruler = () => (
  <svg width="868" height="103" viewBox="422 736 868 103" fontFamily="Liberation Sans" fontSize="12" fill="#222">
    <rect x="434" y="737" width="835" height="21" fill="#d4d4d4" />
    <path d="M435 759H1269L1280 781H424Z" fill="#d4d4d4" />
    {[20, 40, 60, 80, 100, 120, 140].map((n, i) => (
      <g key={n}>
        <rect x={544 + i * 115 - 0.1 * i} y="737" width="2" height="6" />
        <text x={545 + i * 115} y="755" textAnchor="middle">{n}</text>
      </g>
    ))}
    <rect x="431.5" y="736.5" width="7" height="18" fill="#a6a6a6" stroke="#333" strokeWidth="1.5" />
    <rect x="1265.5" y="736.5" width="6.5" height="18" fill="#a6a6a6" stroke="#333" strokeWidth="1.5" />
    <g fontSize="14">
      <text x="424.5" y="770">1</text>
      <text x="1256" y="770">146</text>
    </g>
    <text x="733" y="806" textAnchor="middle" fill="#000">50</text>
    <text x="1011" y="806" textAnchor="middle" fill="#000">100</text>
  </svg>
);

const cell = 5.565;
const chainX = 456.7;
const chainRows = [
  { y: 944, h: 5.5, yellow: [2, 6, 17, 22, 42, 62, 78, 103], orange: [1], clash: [0, 1] },
  { y: 956.3, h: 5.5, yellow: [0, 2, 19, 50, 54, 77, 89, 103, 138, 145], orange: [67], clash: [0, 1, 4] },
  { y: 968.5, h: 5.5, yellow: [0, 2, 52, 56, 65, 130], orange: [132], clash: [0] },
  { y: 981, h: 1, yellow: [50, 54, 66, 100, 103, 130], orange: [], clash: [0, 1] },
];
const ChainsPlot = () => (
  <svg width="868" height="48" viewBox="434 934 868 48">
    {chainRows.map((r) => (
      <g key={r.y}>
        {r.clash.map((c) => <path key={c} d={`M${454 + c * cell} ${r.y + 6}v-6a6 6 0 0 1 12 0v6z`} fill="#f00" />)}
        <rect x={chainX} y={r.y - 0.5} width="813" height={r.h + 1} fill="#8fcf8f" />
        <rect x={chainX} y={r.y} width="813" height={r.h} fill="#00ad00" />
        {Array.from({ length: 145 }, (_, i) => <rect key={i} x={chainX + (i + 1) * cell - 0.5} y={r.y} width="1" height={r.h} fill="#009200" />)}
        {r.yellow.map((c) => <rect key={c} x={chainX + c * cell} y={r.y} width={cell} height={r.h} fill="#f8ee38" />)}
        {r.orange.map((c) => <rect key={c} x={chainX + c * cell} y={r.y} width={cell} height={r.h} fill="#ff7a00" />)}
      </g>
    ))}
  </svg>
);
const DomainsPlot = () => (
  <svg width="868" height="54" viewBox="434 990 868 54">
    <rect x="456.5" y="1001.5" width="813" height="16.5" fill="#ff0084" stroke="#d9609c" />
    <rect x="490.5" y="1018.5" width="584.5" height="15.5" fill="#869ff7" stroke="#6f85cc" />
  </svg>
);
const SecondaryPlot = () => (
  <svg width="868" height="32" viewBox="434 1046 868 32">
    {[[473, 547], [557, 713.5], [729, 891], [896, 986], [1007, 1253]].map(([a, b]) => (
      <rect key={a} x={a + 0.5} y="1069.5" width={b - a - 1} height="16" fill="#ff62a3" stroke="#d9588f" />
    ))}
    {[652, 685.5, 768.5, 874, 924.5, 1118.5, 1135].map((x) => <rect key={x} x={x - 0.5} y="1070" width="1" height="10" fill="#cf4f86" />)}
  </svg>
);

/* ---------- data ---------- */

const tabs: { title: string; icon: React.ReactNode; active?: boolean }[] = [
  { title: "Complete module II of", icon: <BbIcon /> },
  { title: "Comparing 2D and 3D", icon: <HexLogo w={20} h={22} bg="#a9cd98" fg="#86b970" /> },
  { title: "rs334 (SNP) - Explore t", icon: <EnsemblIcon /> },
  { title: "GWAS Catalog", icon: <GwasIcon /> },
  { title: "UniProtKB - P68871", icon: <UniprotIcon /> },
  { title: "Search the PDB archive", icon: <PdbeLogo size={20} /> },
  { title: "Hemoglobin subunit b", icon: <PdbeLogo size={20} soft />, active: true },
];

const bookmarks: [string, number, React.ReactNode, number?][] = [
  ["Apps", 83, <AppsIcon />, -0.35],
  ["World - Simple - M...", 190, <WorldIcon />, -0.1],
  ["Text Editor | Add Te...", 187, <WheelIcon />, -0.65],
  ["Azgaar's Fantasy M...", 190, <AzgaarIcon />, -0.35],
  ["Intubed Engine Pla...", 186, <FIcon />, -0.32],
  ["Intubed Engine Pro...", 189, <NasaIcon />, -0.36],
  ["Mipui", 89, <MipuiIcon />, -0.25],
  ["Time Converter and...", 192, <ClockIcon />, -0.42],
  ["Inkarnate - Create F...", 263, <InkIcon />, -0.3],
];

export default function App() {
  return (
    <Screen>
      <GlobalStyle />
      <TabStrip>
        {tabs.map((t, i) => (
          <TabBox key={t.title} $active={t.active} $sep={i < 5}>
            {t.icon}
            <TabTitle>{t.title}</TabTitle>
            <TabClose><CloseX /></TabClose>
          </TabBox>
        ))}
        <WindowControls>
          <svg width="18" height="18" viewBox="0 0 18 18" stroke="#3c4043" strokeWidth="2.2"><path d="M9 1.5v15M1.5 9h15" /></svg>
          <Spacer />
          <svg width="18" height="18" viewBox="0 0 18 18"><circle cx="9" cy="9" r="9" fill="#3c4043" /><path d="M5.5 6.5h7L9 12z" fill="#fff" /></svg>
          <Spacer $w={40} />
          <svg width="14" height="14" viewBox="0 0 14 14" stroke="#111"><path d="M0 4.5h14" /></svg>
          <Spacer $w={42} />
          <svg width="14" height="18" viewBox="0 0 14 18" stroke="#111" fill="none"><path d="M.5 3.5h10v10H.5zM3 3.5V1h10v10h-2.5" /></svg>
          <Spacer $w={43} />
          <svg width="14" height="18" viewBox="0 0 14 18" stroke="#111"><path d="M.5 1l13 13M13.5 1L.5 14" /></svg>
        </WindowControls>
      </TabStrip>

      <Toolbar>
        <NavIcon $dim><MdArrowBack size={21} /></NavIcon>
        <NavIcon $dim><MdArrowForward size={21} /></NavIcon>
        <NavIcon><MdRefresh size={23} /></NavIcon>
        <NavIcon>
          <svg width="20" height="20" viewBox="0 0 20 20" fill="none" stroke="#5f6368" strokeWidth="1.9"><path d="M2 10.5L10 2.5l8 8M4.8 9v8.5h10.4V9" /></svg>
        </NavIcon>
        <Omnibox>
          <MdLock size={17} />
          <Url><b>ebi.ac.uk</b>/pdbe/entry/pdb/6ka9/protein/2</Url>
          <svg width="19" height="19" viewBox="0 0 19 19" fill="none" stroke="#5f6368" strokeWidth="1.7"><circle cx="7.5" cy="7.5" r="5.7" /><path d="M11.8 11.8l5.7 5.7M5 7.5h5" /></svg>
          <Spacer $w={20} />
          <MdStarBorder size={22} />
        </Omnibox>
        <Extensions>
          <Spacer $w={7} />
          <ExtSlot $w={40}>
            <svg width="20" height="20" viewBox="0 0 20 20"><circle cx="10" cy="10" r="10" fill="#15c39a" /><path d="M14 6.5A5.2 5.2 0 1 0 15 11h-4M15 11v3.5" stroke="#fff" strokeWidth="1.9" fill="none" /></svg>
          </ExtSlot>
          <ExtSlot $w={40}>
            <svg width="18" height="20" viewBox="0 0 18 20"><path d="M9 0l9 3v7q0 6-9 10Q0 16 0 10V3z" fill="#d4141c" /><FaHandPaper x={4.5} y={4.5} size={9.5} color="#fff" /></svg>
          </ExtSlot>
          <ExtSlot $w={40}>
            <svg width="17" height="20" viewBox="0 0 17 20"><path d="M8.5 .7l7.8 2.6v6.5q0 6-7.8 9.5Q.7 15.8 .7 9.8V3.3z" fill="#b3161b" stroke="#8a8a8a" /><text x="8.5" y="11.5" textAnchor="middle" fontFamily="Liberation Sans" fontWeight="700" fontSize="6" fill="#fff">ABP</text><path d="M3.5 15.5L14 4.5" stroke="#ddd" strokeWidth="1.5" /></svg>
          </ExtSlot>
          <ExtSlot $w={40}>
            <svg width="18" height="20" viewBox="0 0 18 20"><path d="M1 .7h11.5L17 5v14.3H1z" fill="#e4e4e4" stroke="#858585" strokeWidth="1.3" /><path d="M12.5 .7V5H17" fill="#fff" stroke="#858585" /><rect x="3.5" y="13" width="11" height="3.5" fill="#aaa" /></svg>
          </ExtSlot>
          <ExtSlot $w={40}><MdExtension size={21} /></ExtSlot>
          <ExtSlot $w={41}><Avatar>J</Avatar></ExtSlot>
          <ExtSlot $w={38}><MdMoreVert size={24} /></ExtSlot>
        </Extensions>
      </Toolbar>

      <BookmarkBar>
        {bookmarks.map(([label, w, icon, ls]) => (
          <Bookmark key={label} $w={w} $ls={ls}>{icon}{label}</Bookmark>
        ))}
        <span>»</span>
        <Spacer />
        <Bar />
        <Spacer $w={15} />
        <Bookmark $w={156} $ls={-0.58}><FolderIcon />Other bookmarks</Bookmark>
        <Bar />
        <Spacer $w={13} />
        <Bookmark $w={107} $ls={-0.38}><ListIcon />Reading list</Bookmark>
      </BookmarkBar>

      <Viewport>
        <PageWrap>
          <Page>
            <MastTop>
              <Embl>EMBL-EBI<HexLogo w={28} h={32} bg="#24512a" fg="#4fa548" /></Embl>
              <MastLink $w={75} $on>Services</MastLink>
              <MastLink $w={80}>Research</MastLink>
              <MastLink $w={72}>Training</MastLink>
              <MastLink $w={78}>About us</MastLink>
            </MastTop>
            <Banner>
              <Banner3d />
              <BannerRow>
                <PdbeLogo size={71} />
                <SiteName>
                  <SiteTitle>Protein Data Bank in Europe</SiteTitle>
                  <SiteTag>Bringing Structure to Biology</SiteTag>
                </SiteName>
                <Spacer />
                <YearsBox><Pdb50 /></YearsBox>
                <SearchPanel>
                  <div>
                    <SearchField />
                    Examples: <DotLink>hemoglobin</DotLink>, <DotLink>BRCA1_HUMAN</DotLink>
                  </div>
                  <SearchAction>
                    <SearchButton>Search</SearchButton>
                    <DotLink>Advanced search</DotLink>
                  </SearchAction>
                </SearchPanel>
              </BannerRow>
              <NavBand>
                <Feedback><FaComments size={16} />Feedback</Feedback>
              </NavBand>
            </Banner>

            <Content>
              <MainCol>
                <Heading>6ka9 <span>›</span> Hemoglobin subunit beta</Heading>
                <Summary>
                  <Facts>
                    <Fact><b>Chains:</b> B, D, F, H</Fact>
                    <Fact><b>Length:</b> 146 amino acids</Fact>
                    <Fact><b>Theoretical weight:</b> 15.89 KDa</Fact>
                    <Fact><b>Source organism:</b> <a><i>Homo sapiens</i></a></Fact>
                    <Fact><b>UniProt:</b></Fact>
                    <CanonicalRow>
                      <Bullet />Canonical:
                      <KbLink><PdbeLogo size={17} kb />P68871</KbLink>
                      <ExternalIcon />
                      <Residues>(Residues: 2-147; Coverage: 99%)</Residues>
                    </CanonicalRow>
                    <Fact><b>Gene name:</b> <a>HBB</a></Fact>
                    <Fact><b>FASTA Sequence</b></Fact>
                    <Fasta>{">pdb|6ka9|B D F H\nVHLTPEEKSAVTALWGKVNVDEVGGEALGRLLVVYPWTQRFFESFGDLSTPDAVMGNPKVKAHGKKVLGAFSDGLAHLDNLKGTFATLS\nELHCDKLHVDPENFRLLGNVLVCVLAHHFGKEFTPPVQAAYQKVVAGVANALAHKYH"}</Fasta>
                  </Facts>
                  <Images>
                    <AssemblyFront />
                    <SmallView box="720 42 306 303" grey={sideGrey} blue={sideBlue} greyP={sideGreyPatches} blueP={sideBluePatches} oy={328} xColor="#22f" />
                    <SmallView box="720 351 306 303" grey={topGrey} blue={topBlue} greyP={topGreyPatches} blueP={topBluePatches} oy={637} xColor="#f00" hole />
                  </Images>
                </Summary>

                <CoverageRow>
                  <PdbeLogo size={15} kb />PDBe-KB: UniProt Coverage View: <DotLink>P68871</DotLink>
                </CoverageRow>

                <Viewer>
                  <ViewerTop>
                    <Controls>
                      <RoundButton><svg width="16" height="16" viewBox="0 0 16 16" fill="none" stroke="#fff" strokeWidth="2.3"><path d="M12.5 4.5A5.2 5.2 0 1 0 12.8 10.8" /><path d="M14.5 1v6.5H8z" fill="#fff" stroke="none" /></svg></RoundButton>
                      <RoundButton><FaMapMarkerAlt size={14} /></RoundButton>
                      <RoundButton><svg width="14" height="12" viewBox="0 0 14 12"><path d="M1 .5h12v3H1zM1 4.5h12v3H1zM1 8.5h12v3H1z" fill="#fff" /></svg></RoundButton>
                    </Controls>
                    <Ruler />
                  </ViewerTop>
                  <TrackRow $h={42}>
                    <TrackLabel $bg="#80eeff" $gap={1} $pl={10} $pb={3}><Caret $down />UniProt</TrackLabel>
                    <TrackPlot />
                  </TrackRow>
                  <TrackRow $h={52}>
                    <TrackLabel $bg="#d9faff" $gap={1} $pl={5} $pb={3}>
                      <svg width="15" height="14" viewBox="0 0 15 14"><circle cx="7.5" cy="7" r="6" fill="none" stroke="#222" strokeWidth="1.6" /><circle cx="7.5" cy="7" r="2.6" fill="#222" /></svg>
                      <Spacer $w={3.5} />PRO_0000424226<Spacer />
                      <DeleteMark />
                    </TrackLabel>
                    <TrackPlot>
                      <svg width="868" height="49" viewBox="434 882 868 49"><rect x="629.5" y="903.5" width="39" height="16" fill="#4169e1" stroke="#7f97dd" /></svg>
                    </TrackPlot>
                  </TrackRow>
                  <TrackRow $h={56}>
                    <TrackLabel $bg="#b2f5ff" $gap={2} $pl={10}><Caret />Chains</TrackLabel>
                    <TrackPlot><ChainsPlot /></TrackPlot>
                  </TrackRow>
                  <TrackRow $h={56}>
                    <TrackLabel $bg="#b2f5ff" $gap={2} $pl={10}><Caret />Domains</TrackLabel>
                    <TrackPlot><DomainsPlot /></TrackPlot>
                  </TrackRow>
                  <TrackRow $h={56}>
                    <TrackLabel $bg="#b2f5ff" $gap={2} $pl={10}><Caret />Secondary structure</TrackLabel>
                    <TrackPlot><SecondaryPlot /></TrackPlot>
                  </TrackRow>
                </Viewer>
              </MainCol>

              <Side>
                <SideBox $h={319} $mb={30}>
                  <SideHead $dark>Quick links</SideHead>
                  <SideLink $mt={11}><IconSlot><FaHome size={15} /></IconSlot>6ka9 overview</SideLink>
                  <SideLink $mt={11} $w={298}><Bullet $ml={6.5} $dark />Citations</SideLink>
                  <SideLink $mt={10} $on><IconSlot><ChainIcon /></IconSlot>Structure analysis</SideLink>
                  <SideLink $mt={0}><IconSlot><ChainIcon /></IconSlot>Function and Biology</SideLink>
                  <SideLink $mt={0}><IconSlot><ChainIcon /></IconSlot>Ligands and Environments</SideLink>
                  <SideLink $mt={0}><IconSlot><ChainIcon /></IconSlot>Experiments and Validation</SideLink>
                  <SideLink $mt={43} $muted><IconSlot $w={19}><DownloadIcon /></IconSlot>Downloads</SideLink>
                </SideBox>
                <SideBox $h={182}>
                  <SideHead>Search similar proteins</SideHead>
                  <SimilarRow $mt={10}><a><IconSlot><Magnifier /></IconSlot>Similar 3D structures</a><span>(PDBeFold)</span></SimilarRow>
                  <SimilarRow $mt={0}><a><IconSlot><Magnifier /></IconSlot>Similar sequences</a></SimilarRow>
                  <SimilarRow $mt={22}><a><IconSlot><WrenchIcon /></IconSlot>BLAST P68871</a><span>(UniProt)</span></SimilarRow>
                </SideBox>
              </Side>
            </Content>
          </Page>
        </PageWrap>
        <ScrollTrack>
          <svg width="9" height="5" viewBox="0 0 9 5"><path d="M0 5l4.5-5L9 5z" fill="#8a8a8a" /></svg>
          <ScrollThumb />
          <svg width="9" height="5" viewBox="0 0 9 5"><path d="M0 0l4.5 5L9 0z" fill="#444" /></svg>
        </ScrollTrack>
      </Viewport>
      <Taskbar />
    </Screen>
  );
}
